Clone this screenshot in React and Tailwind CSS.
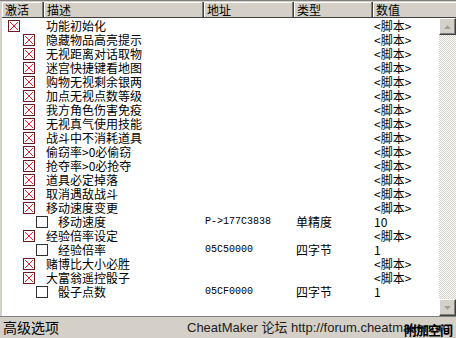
import React from "react";

const rows = [
  { level: 0, checked: true, desc: "功能初始化", value: "<脚本>" },
  { level: 1, checked: true, desc: "隐藏物品高亮提示", value: "<脚本>" },
  { level: 1, checked: true, desc: "无视距离对话取物", value: "<脚本>" },
  { level: 1, checked: true, desc: "迷宫快捷键看地图", value: "<脚本>" },
  { level: 1, checked: true, desc: "购物无视剩余银两", value: "<脚本>" },
  { level: 1, checked: true, desc: "加点无视点数等级", value: "<脚本>" },
  { level: 1, checked: true, desc: "我方角色伤害免疫", value: "<脚本>" },
  { level: 1, checked: true, desc: "无视真气使用技能", value: "<脚本>" },
  { level: 1, checked: true, desc: "战斗中不消耗道具", value: "<脚本>" },
  { level: 1, checked: true, desc: "偷窃率>0必偷窃", value: "<脚本>" },
  { level: 1, checked: true, desc: "抢夺率>0必抢夺", value: "<脚本>" },
  { level: 1, checked: true, desc: "道具必定掉落", value: "<脚本>" },
  { level: 1, checked: true, desc: "取消遇敌战斗", value: "<脚本>" },
  { level: 1, checked: true, desc: "移动速度变更", value: "<脚本>" },
  { level: 2, checked: false, desc: "移动速度", addr: "P->177C3838", type: "单精度", value: "10" },
  { level: 1, checked: true, desc: "经验倍率设定", value: "<脚本>" },
  { level: 2, checked: false, desc: "经验倍率", addr: "05C50000", type: "四字节", value: "1" },
  { level: 1, checked: true, desc: "赌博比大小必胜", value: "<脚本>" },
  { level: 1, checked: true, desc: "大富翁遥控骰子", value: "<脚本>" },
  { level: 2, checked: false, desc: "骰子点数", addr: "05CF0000", type: "四字节", value: "1" },
];

function Box({ checked }) {
  return (
    <svg width="12" height="12" viewBox="0 0 12 12" className="shrink-0">
      <rect x="0.5" y="0.5" width="11" height="11" fill="#fff" stroke={checked ? "#6b1d1d" : "#303030"} />
      {checked && (
        <path d="M2 2L10 10M10 2L2 10" stroke="#e0202a" strokeWidth="1" />
      )}
    </svg>
  );
}

function HeadCell({ w, label }) {
  return (
    <div
      className={`${w} h-full flex items-center pl-[3px] border-r border-r-[#404040] shadow-[inset_-1px_0_0_#808080,inset_1px_1px_0_#fff]`}
    >
      {label}
    </div>
  );
}

function Arrow({ up }) {
  return (
    <div className="h-[17px] w-[17px] bg-[#d4d0c8] border border-t-white border-l-white border-r-[#404040] border-b-[#404040] shadow-[inset_-1px_-1px_0_#808080] flex items-center justify-center">
      <svg width="7" height="4" viewBox="0 0 7 4">
        <path d={up ? "M0 4L3.5 0L7 4Z" : "M0 0L3.5 4L7 0Z"} fill="#a0a0a0" />
      </svg>
    </div>
  );
}

export default function App() {
  const cjk = "font-['SimSun','Noto_Sans_CJK_SC',sans-serif]";
  return (
    <div className={`w-[456px] h-[338px] bg-[#d4d0c8] flex flex-col overflow-hidden text-[12px] text-black ${cjk}`}>
      <div className="h-[2px] bg-[#d4d0c8] border-t border-t-[#808080]" />
      <div className="flex flex-col h-[315px] pl-[2px] bg-[#d4d0c8]">
        {/* header */}
        <div className="flex h-[16px] bg-[#d4d0c8] border-b border-b-[#404040] leading-[14px]">
          <HeadCell w="w-[42px]" label="激活" />
          <HeadCell w="w-[160px]" label="描述" />
          <HeadCell w="w-[90px]" label="地址" />
          <HeadCell w="w-[79px]" label="类型" />
          <div className="flex-1 h-full flex items-center pl-[3px] shadow-[inset_1px_1px_0_#fff]">数值</div>
        </div>
        {/* body */}
        <div className="flex flex-1 bg-white">
          <div className="flex-1 flex flex-col pt-[1px]">
            {rows.map((r, i) => {
              const first = r.level === 2 ? "w-[56px]" : "w-[44px]";
              const pad = r.level === 0 ? "pl-[6px]" : r.level === 1 ? "pl-[21px]" : "pl-[34px]";
              return (
                <div key={i} className="flex h-[14px] items-center leading-[14px] whitespace-nowrap">
                  <div className={`${first} ${pad} flex items-center`}>
                    <Box checked={r.checked} />
                  </div>
                  <div className={r.level === 2 ? "w-[147px]" : "w-[159px]"}>{r.desc}</div>
                  <div className="w-[91px] font-['Liberation_Mono',monospace] text-[10px]">{r.addr || ""}</div>
                  <div className="w-[78px]">{r.type || ""}</div>
                  <div className="flex-1">{r.value}</div>
                </div>
              );
            })}
          </div>
          <div className="w-[17px] flex flex-col bg-[repeating-conic-gradient(#d4d0c8_0_25%,#ffffff_0_50%)] bg-[length:2px_2px]">
            <Arrow up />
            <div className="flex-1" />
            <Arrow />
          </div>
        </div>
      </div>
      {/* status bar */}
      <div className="relative flex-1 flex items-center border-t border-t-[#808080] font-['Liberation_Sans','Noto_Sans_CJK_SC',sans-serif] text-[13px]">
        <div className={`pl-[3px] w-[187px] ${cjk} text-[14px]`}>高级选项</div>
        <div className="whitespace-nowrap text-[#202020]">CheatMaker 论坛 http://forum.cheatmaker.org</div>
        <div className={`absolute right-[4px] top-[3px] ${cjk} text-[13px] font-bold tracking-[-1px]`}>附加空间</div>
      </div>
    </div>
  );
}
